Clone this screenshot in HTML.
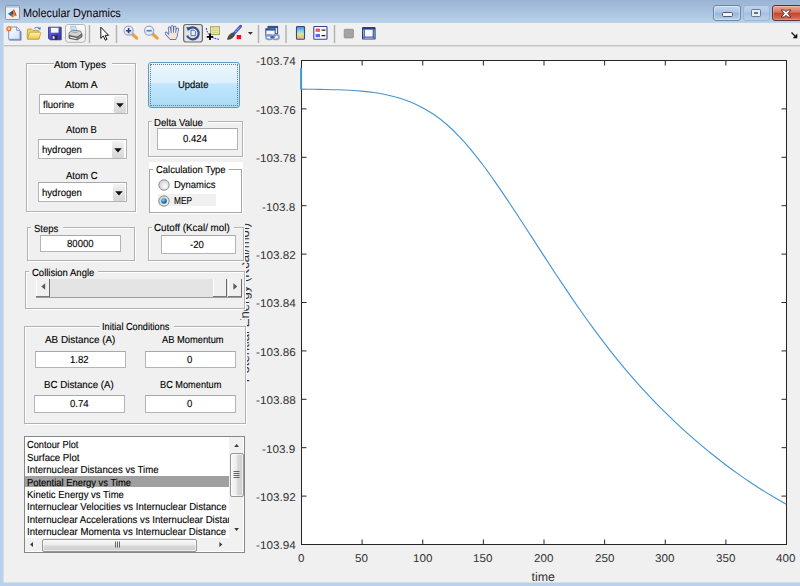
<!DOCTYPE html>
<html><head><meta charset="utf-8"><title>Molecular Dynamics</title>
<style>
html,body{margin:0;padding:0}
body{text-rendering:geometricPrecision;width:800px;height:586px;overflow:hidden;position:relative;background:#f0f0f0;font-family:"Liberation Sans",sans-serif}
.t{-webkit-text-stroke:0.12px currentColor;position:absolute;white-space:nowrap;line-height:normal;transform-origin:0 50%;display:block}
.pn{position:absolute;border:1px solid #b2b2b2;box-shadow:1px 1px 0 #fff, inset 1px 1px 0 #fff;background:#f0f0f0}
.ed{position:absolute;border:1px solid #b2b4ba;background:#fff;border-top-color:#a6a8af}
.abs{position:absolute}
</style></head><body>

<div class="abs" style="left:244.6px;top:302.5px;width:0;height:0"><span class="t" style="left:-77.54px;top:-7.94px;font-size:12.8px;color:#333;-webkit-text-stroke:0;transform-origin:50% 50%;transform:rotate(-90deg) scaleX(1.0284)">Potential Energy (Kcal/mol)</span></div>
<div class="abs" style="left:0;top:0;width:800px;height:23px;background:linear-gradient(#9ab3d2,#b9d1ea)"></div>
<div class="abs" style="left:0;top:23px;width:4px;height:563px;background:linear-gradient(90deg,#b9d1ea 0,#b9d1ea 2.6px,#c9dbef 3.2px,#dde7f1 4px)"></div>
<div class="abs" style="left:3px;top:582px;width:797px;height:4px;background:linear-gradient(#dde7f1 0,#c4d8ee 0.9px,#b9d1ea 1.6px,#b9d1ea 4px)"></div><div class="abs" style="left:0;top:582px;width:3px;height:4px;background:#b9d1ea"></div>
<div class="abs" style="left:4px;top:23px;width:796px;height:22px;background:#f0f0f0"></div>
<div class="abs" style="left:4px;top:45px;width:796px;height:1px;background:#c4c4c4"></div>
<div class="abs" style="left:4px;top:46px;width:796px;height:1px;background:#dcdcdc"></div>
<svg class="abs" style="left:5px;top:5px" width="16" height="15" viewBox="0 0 16 15">
<defs><linearGradient id="lgb" x1="0" y1="0" x2="1" y2="0"><stop offset="0" stop-color="#4d97de"/><stop offset="1" stop-color="#1b3866"/></linearGradient></defs>
<rect x="0.500" y="0.500" width="14" height="14" rx="1.400" fill="#f1f1f3" stroke="#8297b4"/>
<rect x="1" y="0.900" width="13" height="1.800" fill="#a9c9e9"/>
<path d="M2.700 8.800L7.900 5.600l0.400 3-2.100 2.600z" fill="url(#lgb)"/>
<path d="M7.900 5.600C8.300 5 8.500 4.200 8.900 4c0.700 1 1.500 4.600 3 6.900-1-0.700-2.100-0.100-2.900 0.700-1 1-2 1-2.800-0.400l2.100-2.600z" fill="#e8641f"/>
<path d="M8.600 6c0.400 2 0.200 4.500-1.200 6.200 0.800 0.100 1.600-0.500 2.200-1.300 0.200-1.900-0.200-3.700-1-4.900z" fill="#f8a030"/>
<path d="M8.900 4c0.700 1 1.500 4.600 3 6.900-0.700-0.500-1.200-0.600-1.700-0.500C10 8.200 9.600 6 8.900 4z" fill="#c8341f"/>
</svg>
<span class="t" style="left:23.4px;top:6.3px;font-size:12px;color:#0c0c18;transform:scaleX(0.905);text-shadow:0 0 3px rgba(255,255,255,0.55)">Molecular Dynamics</span>
<!-- caption buttons -->
<div class="abs" style="left:713px;top:5px;width:26px;height:14px;border:1px solid #6e86a6;border-radius:3px;background:linear-gradient(#c6d9f0 0%,#adc6e4 45%,#98b6da 50%,#b9d2ec 100%);box-shadow:inset 0 0 0 1px rgba(255,255,255,0.35)"></div>
<div class="abs" style="left:722px;top:12px;width:9px;height:3px;border:1px solid #4d5a6e;border-radius:1.5px;background:#f4f4f4"></div>
<div class="abs" style="left:743px;top:5px;width:25px;height:14px;border:1px solid #9db4d2;border-radius:3px;background:linear-gradient(#bed3ec 0%,#aec7e5 45%,#a3bfe0 50%,#b9d2ec 100%)"></div>
<div class="abs" style="left:752px;top:10px;width:4px;height:2px;border:2px solid #ececec;outline:1px solid #6d7a8e;background:#5578a8;border-radius:0.5px"></div>
<div class="abs" style="left:772px;top:5px;width:28px;height:14px;border:1px solid #5e2f33;border-radius:3px;background:linear-gradient(#e9a898 0%,#d9735d 45%,#c5432a 50%,#d7745c 100%);box-shadow:inset 0 0 0 1px rgba(255,255,255,0.25)"></div>
<svg class="abs" style="left:780px;top:8.5px" width="12" height="9" viewBox="0 0 12 9"><path d="M1 1h3.4L6 2.7 7.6 1H11L7.9 4.5 11 8H7.6L6 6.3 4.4 8H1L4.1 4.5z" fill="#fff" stroke="#4e3236" stroke-width="1" stroke-linejoin="round"/></svg>

<svg class="abs" style="left:0;top:0" width="800" height="48" viewBox="0 0 800 48">
<defs>
<linearGradient id="gpage" x1="0" y1="0" x2="1" y2="1"><stop offset="0" stop-color="#ffffff"/><stop offset="1" stop-color="#cfe0f5"/></linearGradient>
<linearGradient id="gfold" x1="0" y1="0" x2="0" y2="1"><stop offset="0" stop-color="#fdf4b4"/><stop offset="1" stop-color="#eec64c"/></linearGradient>
<linearGradient id="gcb" x1="0" y1="0" x2="0" y2="1"><stop offset="0" stop-color="#5a7be0"/><stop offset="0.35" stop-color="#7fd6e6"/><stop offset="0.6" stop-color="#d8e8a0"/><stop offset="0.8" stop-color="#f5c27a"/><stop offset="1" stop-color="#f0a0b0"/></linearGradient>
<radialGradient id="glens" cx="0.4" cy="0.35" r="0.7"><stop offset="0" stop-color="#ffffff"/><stop offset="1" stop-color="#bfe3f5"/></radialGradient>
<linearGradient id="gsave" x1="0" y1="0" x2="1" y2="1"><stop offset="0" stop-color="#7472dc"/><stop offset="0.5" stop-color="#4c4ac4"/><stop offset="1" stop-color="#3432a0"/></linearGradient>
<linearGradient id="ghov" x1="0" y1="0" x2="0" y2="1"><stop offset="0" stop-color="#fbfbfb"/><stop offset="0.500" stop-color="#f3f3f3"/><stop offset="0.520" stop-color="#ebebeb"/><stop offset="1" stop-color="#f1f1f1"/></linearGradient>
</defs>
<!-- new -->
<path d="M9.400 39.900h11.400v-8.600" fill="none" stroke="#5a68a8" stroke-width="1.200"/>
<path d="M8.700 27h8l3.300 3.300v9h-11.300z" fill="url(#gpage)" stroke="#7b92cc" stroke-width="1"/>
<path d="M16.700 27v3.300h3.300" fill="#dfe8f6" stroke="#6a80bc" stroke-width="0.800"/>
<path d="M8.900 25.400l0.800 1.600 1.700-0.600-0.600 1.700 1.600 0.800-1.600 0.800 0.600 1.700-1.700-0.600-0.800 1.600-0.800-1.600-1.700 0.600 0.600-1.700-1.600-0.800 1.600-0.800-0.600-1.700 1.700 0.600z" fill="#ec6f34"/>
<circle cx="8.900" cy="28.700" r="1.300" fill="#fbd67a"/>
<!-- open -->
<path d="M27.300 38.800v-8.600c0-0.800 0.400-1.200 1.200-1.200h3l1.200 1.400h5.200c0.800 0 1.200 0.400 1.200 1.200v7.200z" fill="#efd264" stroke="#b8952c" stroke-width="0.800"/>
<path d="M27.400 39.200l2-6.200c0.200-0.600 0.600-0.800 1.200-0.800h9.400c0.800 0 1 0.400 0.800 1l-2 6z" fill="url(#gfold)" stroke="#c09c30" stroke-width="0.800"/>
<path d="M34.200 28.700c1.500-1.700 3.800-1.700 5 -0.300" fill="none" stroke="#7a9acb" stroke-width="1.200"/>
<path d="M40.700 27l-0.400 3.100-2.500-1.500z" fill="#4a70b0"/>
<!-- save -->
<path d="M48.500 27.200h12.700v12.600h-11.200l-1.500-1.500z" fill="url(#gsave)" stroke="#2c2a86" stroke-width="0.800"/>
<rect x="51" y="27.800" width="7.500" height="4.900" fill="#f6f6fb"/>
<rect x="51.800" y="35.300" width="5.800" height="4.300" fill="#26264e"/>
<rect x="52.600" y="36.200" width="2" height="2.600" fill="#e8e8f0"/>
<!-- print (hover) -->
<rect x="65.500" y="24.500" width="20" height="17.800" rx="2.800" fill="url(#ghov)" stroke="#b2b2b2" stroke-width="1"/>
<path d="M70.700 26.200h5l1.300 5.400-5.800 0.600z" fill="#c2e3fa" stroke="#8db6da" stroke-width="0.700"/>
<path d="M69 32.800l3.600-2.600 8 0.900 1.300 3-4.800 3.100-8-1.600z" fill="#d2d2d2" stroke="#6e6e6e" stroke-width="0.800" stroke-linejoin="round"/>
<path d="M72 32l5.600 0.700" stroke="#9a9a9a" stroke-width="0.800"/>
<path d="M69.100 35.600l8 1.600 4.800-3.100v2.800l-4.800 3-8-1.600z" fill="#858585" stroke="#4a4a4a" stroke-width="0.800" stroke-linejoin="round"/>
<path d="M70.300 36.800l5.800 1.200v1l-5.800-1.200z" fill="#f4f4f4"/>
<rect x="79.300" y="35.900" width="1.300" height="1" fill="#3fc040"/>
<!-- separators -->
<path d="M89.5 25v18M116.5 25v18M258.5 25v18M286 25v18M334.5 25v18" stroke="#b4b4b4" stroke-width="1.500"/>
<!-- pointer -->
<path d="M100.8 27.2v11.2l2.6-2.4 1.9 4.2 1.7-0.8-1.9-4.1h3.5z" fill="#fff" stroke="#111" stroke-width="1" stroke-linejoin="round"/>
<!-- zoom in -->
<path d="M132.400 34.300l4.300 3.800" stroke="#e9a23c" stroke-width="3.200" stroke-linecap="round"/>
<circle cx="128.600" cy="30.700" r="4.600" fill="url(#glens)" stroke="#a09cd2" stroke-width="1.100"/>
<path d="M126 30.700h5.200M128.600 28.100v5.200" stroke="#283c84" stroke-width="1.600"/>
<!-- zoom out -->
<path d="M152.900 34.300l4.300 3.800" stroke="#e9a23c" stroke-width="3.200" stroke-linecap="round"/>
<circle cx="149.100" cy="30.700" r="4.600" fill="url(#glens)" stroke="#a09cd2" stroke-width="1.100"/>
<path d="M146.500 30.700h5.200" stroke="#5a78b4" stroke-width="1.700"/>
<!-- hand -->
<g fill="none" stroke-linecap="round" stroke-linejoin="round">
<path d="M170.200 33.500L169.300 28M172.400 33L172.100 26.800M174.500 33.200L174.900 27.300M176.400 34L177.500 29.200M168.800 36.400L166.200 33.200" stroke="#3f6fc0" stroke-width="3"/>
<path d="M168.300 35c0 2.500 1 3.600 1.600 4.500h6c0.400-1.400 1.700-2.800 1.600-5.500l-1.500-1.500h-6.500z" fill="#fbe3d0" stroke="#3f6fc0" stroke-width="0.9"/>
<path d="M170.200 33.500L169.300 28M172.400 33L172.100 26.800M174.500 33.200L174.900 27.300M176.400 34L177.500 29.200M168.800 36.400L166.200 33.200" stroke="#fbe3d0" stroke-width="1.500"/>
</g>
<!-- rotate (selected) -->
<rect x="183.600" y="24.500" width="18.800" height="17.500" rx="2.500" fill="#e2e2e2" stroke="#6c6c6c" stroke-width="1.200"/>
<path d="M188.300 29.200a6 6 0 1 1 -1.200 6.400" fill="none" stroke="#2f4f8c" stroke-width="2.100"/>
<path d="M186.300 27l4.400 0.600-2.800 3.600z" fill="#2f4f8c"/>
<path d="M191 30.200h3l1.400 1.400v4h-4.400z" fill="#e8eef8" stroke="#3a5a98" stroke-width="0.800"/>
<!-- data cursor -->
<rect x="210.600" y="26.700" width="8.800" height="7.800" fill="#eeeeb4" stroke="#a6a65e" stroke-width="1.100"/>
<path d="M212 28.800h6M212 30.600h6M212 32.400h6" stroke="#c4c47c" stroke-width="0.700"/>
<path d="M206.300 28c0.600 5.600 4.600 10.400 12.600 11.300" fill="none" stroke="#2a2ae0" stroke-width="1" stroke-dasharray="1.800 1"/>
<path d="M206.800 36.800h6.400M210 33.600v6.400" stroke="#000" stroke-width="1.800"/>
<!-- brush -->
<path d="M234.300 33.200l6.300-6.900" stroke="#4c5cc4" stroke-width="3" stroke-linecap="round"/>
<path d="M235.600 31.800l4.400-4.800" stroke="#dfe4fa" stroke-width="0.900" stroke-dasharray="1.200 1"/>
<path d="M227.600 39.400c0.200-2.800 2.200-5.800 4.900-6.500l2 1.700c-0.500 2.800-3.500 4.800-6.900 4.800z" fill="#4e4e4e" stroke="#2a2a2a" stroke-width="0.600"/>
<rect x="236.700" y="35" width="4.400" height="4.200" fill="#f20c1c"/>
<path d="M247.900 32h5l-2.500 2.700z" fill="#333"/>
<!-- link -->
<rect x="268" y="26.400" width="9.600" height="7.400" fill="#eef2f9" stroke="#2f4c8e" stroke-width="1"/>
<rect x="268" y="26.400" width="9.600" height="1.700" fill="#2f4c8e"/>
<rect x="265.800" y="28.800" width="9.400" height="7" fill="#f4f6fb" stroke="#2f4c8e" stroke-width="1"/>
<rect x="265.800" y="28.800" width="9.400" height="1.700" fill="#2f4c8e"/>
<rect x="266" y="34.800" width="6.600" height="4.600" rx="2.300" fill="none" stroke="#7f9fcc" stroke-width="1.700"/>
<rect x="272.400" y="34.800" width="6.600" height="4.600" rx="2.300" fill="none" stroke="#7f9fcc" stroke-width="1.700"/>
<path d="M270.400 37.100h4.200" stroke="#33497e" stroke-width="1.400"/>
<!-- colorbar -->
<rect x="296.500" y="26.500" width="8" height="12.800" rx="0.800" fill="url(#gcb)" stroke="#2f4a8a" stroke-width="1.100"/>
<!-- legend -->
<rect x="313.800" y="26.500" width="13.200" height="12.800" rx="0.800" fill="#fbfbfd" stroke="#2f4a8a" stroke-width="1.100"/>
<rect x="315.600" y="28.600" width="4.400" height="3.200" fill="#f05060"/>
<rect x="315.600" y="34" width="4.400" height="3.200" fill="#5868e8"/>
<path d="M321.600 30.200h3.800M321.600 35.600h3.800" stroke="#222" stroke-width="1.200"/>
<!-- hide plot tools -->
<rect x="344.200" y="29.300" width="9.200" height="8.600" rx="0.800" fill="#a4a4a4" stroke="#8c8c8c" stroke-width="0.800"/>
<!-- show plot tools -->
<rect x="362.600" y="27.600" width="12.400" height="11.400" rx="0.600" fill="#f6f8fc" stroke="#26407e" stroke-width="1.200"/>
<rect x="362.600" y="27.600" width="12.400" height="2" fill="#26407e"/>
<path d="M364.300 29v9.400M373.300 29v9.400M363 37.200h11.600" stroke="#4a66a8" stroke-width="1.300"/>
<!-- dock arrow -->
<path d="M791.500 32.500l4.600 4.600" stroke="#111" stroke-width="1.300"/>
<path d="M797.300 33.600v4.600h-4.600z" fill="#111"/>
</svg>

<div class="pn" style="left:26px;top:63px;width:108px;height:147px"></div>
<div style="position:absolute;left:53.5px;top:57px;width:58.5px;height:13px;background:#f0f0f0"></div>
<span class="t" style="left:54.40px;top:60px;font-size:10.2px;color:#000;transform:scaleX(0.9689);">Atom Types</span>
<span class="t" style="left:65.00px;top:80px;font-size:10.2px;color:#000;transform:scaleX(0.9884);">Atom A</span>
<div class="ed" style="left:39px;top:94px;width:87px;height:18px"></div>
<div style="position:absolute;left:113.5px;top:95.5px;width:12px;height:17px;border-radius:1.5px;background:linear-gradient(#f2f2f2,#d6d6d6)"></div>
<svg style="position:absolute;left:115.8px;top:102.8px" width="8" height="5"><path d="M0.2 0.3h7.6L4 4.6z" fill="#111"/></svg>
<span class="t" style="left:43.00px;top:100px;font-size:10.2px;color:#000;transform:scaleX(0.9400);">fluorine</span>
<span class="t" style="left:66.30px;top:125px;font-size:10.2px;color:#000;transform:scaleX(0.9239);">Atom B</span>
<div class="ed" style="left:37.5px;top:139px;width:87.0px;height:18px"></div>
<div style="position:absolute;left:112.0px;top:140.5px;width:12px;height:17px;border-radius:1.5px;background:linear-gradient(#f2f2f2,#d6d6d6)"></div>
<svg style="position:absolute;left:114.3px;top:147.8px" width="8" height="5"><path d="M0.2 0.3h7.6L4 4.6z" fill="#111"/></svg>
<span class="t" style="left:41.50px;top:145px;font-size:10.2px;color:#000;transform:scaleX(0.9400);">hydrogen</span>
<span class="t" style="left:66.00px;top:171px;font-size:10.2px;color:#000;transform:scaleX(0.9292);">Atom C</span>
<div class="ed" style="left:38px;top:182px;width:87px;height:18px"></div>
<div style="position:absolute;left:112.5px;top:183.5px;width:12px;height:17px;border-radius:1.5px;background:linear-gradient(#f2f2f2,#d6d6d6)"></div>
<svg style="position:absolute;left:114.8px;top:190.8px" width="8" height="5"><path d="M0.2 0.3h7.6L4 4.6z" fill="#111"/></svg>
<span class="t" style="left:42.00px;top:188px;font-size:10.2px;color:#000;transform:scaleX(0.9400);">hydrogen</span>
<div class="abs" style="left:148px;top:62px;width:90px;height:44px;border:1px solid #5f9ac6;border-radius:3px;background:linear-gradient(#ebf6fd 0%,#dcf0fc 46%,#c0e6fc 47%,#abdcf6 100%)"></div>
<div class="abs" style="left:150px;top:64px;width:86px;height:40px;border:1px dotted #777;border-radius:1px"></div>
<span class="t" style="left:178.00px;top:80px;font-size:10.2px;color:#000;transform:scaleX(0.9273);">Update</span>
<div class="pn" style="left:148px;top:121px;width:93px;height:34px"></div>
<div style="position:absolute;left:152px;top:115px;width:56px;height:13px;background:#f0f0f0"></div>
<span class="t" style="left:154.20px;top:118px;font-size:10.2px;color:#000;transform:scaleX(0.9427);">Delta Value</span>
<div class="ed" style="left:157px;top:128px;width:79px;height:20px"></div>
<span class="t" style="left:183.00px;top:134px;font-size:10.2px;color:#000;transform:scaleX(0.9400);">0.424</span>
<div style="position:absolute;left:148.5px;top:162.3px;width:94.5px;height:51.19999999999999px;background:#fff"></div>
<div class="abs" style="left:149px;top:169px;width:91px;height:42px;border:1px solid #a8a8a8;box-shadow:1px 1px 0 #fff"></div>
<div style="position:absolute;left:153px;top:163px;width:76px;height:13px;background:#fff"></div>
<span class="t" style="left:155.50px;top:165px;font-size:10.2px;color:#000;transform:scaleX(0.9265);">Calculation Type</span>
<div style="position:absolute;left:157.6px;top:194px;width:58.900000000000006px;height:12px;background:#f0f0f0"></div>
<svg class="abs" style="left:157px;top:178px" width="14" height="14"><defs><radialGradient id="rg185" cx="0.6" cy="0.6" r="0.7"><stop offset="0" stop-color="#fdfdfd"/><stop offset="1" stop-color="#c9c9c9"/></radialGradient><radialGradient id="rb185" cx="0.4" cy="0.35" r="0.7"><stop offset="0" stop-color="#8fd6f7"/><stop offset="0.5" stop-color="#2a86c8"/><stop offset="1" stop-color="#0f3d73"/></radialGradient></defs><circle cx="7" cy="7" r="5.2" fill="url(#rg185)" stroke="#8e8f8f" stroke-width="1"/></svg>
<svg class="abs" style="left:157px;top:193.5px" width="14" height="14"><defs><radialGradient id="rg200" cx="0.6" cy="0.6" r="0.7"><stop offset="0" stop-color="#fdfdfd"/><stop offset="1" stop-color="#c9c9c9"/></radialGradient><radialGradient id="rb200" cx="0.4" cy="0.35" r="0.7"><stop offset="0" stop-color="#8fd6f7"/><stop offset="0.5" stop-color="#2a86c8"/><stop offset="1" stop-color="#0f3d73"/></radialGradient></defs><circle cx="7" cy="7" r="5.2" fill="url(#rg200)" stroke="#8e8f8f" stroke-width="1"/><circle cx="7" cy="7" r="2.8" fill="url(#rb200)"/></svg>
<span class="t" style="left:174.00px;top:180px;font-size:10.2px;color:#000;transform:scaleX(0.9269);">Dynamics</span>
<span class="t" style="left:174.00px;top:196px;font-size:10.2px;color:#000;transform:scaleX(0.8143);">MEP</span>
<div class="pn" style="left:27px;top:227px;width:106px;height:32px"></div>
<div style="position:absolute;left:31px;top:222px;width:32px;height:13px;background:#f0f0f0"></div>
<span class="t" style="left:33.60px;top:224px;font-size:10.2px;color:#000;transform:scaleX(0.9355);">Steps</span>
<div class="ed" style="left:40px;top:235px;width:79px;height:15px"></div>
<span class="t" style="left:66.67px;top:239px;font-size:10.2px;color:#000;transform:scaleX(0.9400);">80000</span>
<div style="position:absolute;left:148px;top:221px;width:96.5px;height:40px;background:#f0f0f0"></div>
<div class="pn" style="left:148px;top:227px;width:94px;height:32px"></div>
<div style="position:absolute;left:152px;top:222px;width:82px;height:13px;background:#f0f0f0"></div>
<span class="t" style="left:153.90px;top:223px;font-size:10.2px;color:#000;transform:scaleX(0.9644);">Cutoff (Kcal/ mol)</span>
<div class="ed" style="left:161px;top:235px;width:73px;height:17px"></div>
<span class="t" style="left:189.97px;top:240px;font-size:10.2px;color:#000;transform:scaleX(0.9400);">-20</span>
<div style="position:absolute;left:25px;top:265px;width:220.5px;height:45px;background:#f0f0f0"></div>
<div class="pn" style="left:25px;top:271px;width:218px;height:36px"></div>
<div style="position:absolute;left:29px;top:266px;width:69px;height:13px;background:#f0f0f0"></div>
<span class="t" style="left:31.60px;top:268px;font-size:10.2px;color:#000;transform:scaleX(0.9326);">Collision Angle</span>
<div style="position:absolute;left:36px;top:278.5px;width:206px;height:18.0px;background:#e4e4e4;border-bottom:1px solid #9c9c9c"></div>
<div class="abs" style="left:36px;top:278.5px;width:12.7px;height:17px;background:#f0f0f0;border-right:1.3px solid #6a6a6a;border-bottom:1.3px solid #7a7a7a;box-shadow:inset 1px 0 0 #fff"></div>
<svg class="abs" style="left:40.8px;top:283.0px" width="5" height="8"><path d="M4.2 0.2v6.6L0.3 3.5z" fill="#5a5a5a"/></svg>
<div class="abs" style="left:213px;top:278.5px;width:13.2px;height:17px;background:#f0f0f0;border-right:1.3px solid #6a6a6a;border-bottom:1.3px solid #7a7a7a;box-shadow:inset 1px 0 0 #fff"></div>
<div class="abs" style="left:227.5px;top:278.5px;width:13.7px;height:17px;background:#f0f0f0;border-right:1.3px solid #6a6a6a;border-bottom:1.3px solid #7a7a7a;box-shadow:inset 1px 0 0 #fff"></div>
<svg class="abs" style="left:232.8px;top:283.0px" width="5" height="8"><path d="M0.4 0.2v6.6L4.3 3.5z" fill="#5a5a5a"/></svg>
<div style="position:absolute;left:24px;top:320px;width:223px;height:105px;background:#f0f0f0"></div>
<div class="pn" style="left:24px;top:326px;width:220px;height:96px"></div>
<div style="position:absolute;left:100px;top:321px;width:74px;height:13px;background:#f0f0f0"></div>
<span class="t" style="left:101.80px;top:322px;font-size:10.2px;color:#000;transform:scaleX(0.9006);">Initial Conditions</span>
<span class="t" style="left:45.00px;top:335px;font-size:10.2px;color:#000;transform:scaleX(0.9717);">AB Distance (A)</span>
<span class="t" style="left:161.60px;top:335px;font-size:10.2px;color:#000;transform:scaleX(0.9147);">AB Momentum</span>
<div class="ed" style="left:35px;top:351px;width:89px;height:15px"></div>
<span class="t" style="left:70.17px;top:355px;font-size:10.2px;color:#000;transform:scaleX(0.9400);">1.82</span>
<div class="ed" style="left:145px;top:351px;width:88.5px;height:15px"></div>
<span class="t" style="left:186.58px;top:355px;font-size:10.2px;color:#000;transform:scaleX(0.9400);">0</span>
<span class="t" style="left:44.00px;top:380px;font-size:10.2px;color:#000;transform:scaleX(0.9546);">BC Distance (A)</span>
<span class="t" style="left:159.60px;top:380px;font-size:10.2px;color:#000;transform:scaleX(0.9027);">BC Momentum</span>
<div class="ed" style="left:34px;top:395px;width:89px;height:16px"></div>
<span class="t" style="left:69.67px;top:399px;font-size:10.2px;color:#000;transform:scaleX(0.9400);">0.74</span>
<div class="ed" style="left:145px;top:395px;width:88.5px;height:16px"></div>
<span class="t" style="left:186.58px;top:399px;font-size:10.2px;color:#000;transform:scaleX(0.9400);">0</span>
<div class="abs" style="left:24px;top:436px;width:219px;height:115px;border:1px solid #828790;background:#fff"></div>
<div class="abs" style="left:25px;top:437px;width:203.5px;height:100.5px;overflow:hidden">
<div style="position:absolute;left:0px;top:38.5px;width:204px;height:11.899999999999999px;background:#a0a0a0"></div>
<span class="t" style="left:1.50px;top:3px;font-size:10.2px;color:#000;transform:scaleX(0.9083);">Contour Plot</span>
<span class="t" style="left:1.50px;top:16px;font-size:10.2px;color:#000;transform:scaleX(0.9449);">Surface Plot</span>
<span class="t" style="left:1.50px;top:28px;font-size:10.2px;color:#000;transform:scaleX(0.9451);">Internuclear Distances vs Time</span>
<span class="t" style="left:1.50px;top:41px;font-size:10.2px;color:#000;transform:scaleX(0.9227);">Potential Energy vs Time</span>
<span class="t" style="left:1.50px;top:53px;font-size:10.2px;color:#000;transform:scaleX(0.9350);">Kinetic Energy vs Time</span>
<span class="t" style="left:1.50px;top:65px;font-size:10.2px;color:#000;transform:scaleX(0.9420);">Internuclear Velocities vs Internuclear Distance</span>
<span class="t" style="left:1.50px;top:78px;font-size:10.2px;color:#000;transform:scaleX(0.9420);">Internuclear Accelerations vs Internuclear Distance</span>
<span class="t" style="left:1.50px;top:90px;font-size:10.2px;color:#000;transform:scaleX(0.9429);">Internuclear Momenta vs Internuclear Distance</span>
</div>
<div class="abs" style="left:229px;top:437px;width:14px;height:114px;background:#f1f1f1"></div>
<div class="abs" style="left:25px;top:537.5px;width:204px;height:13.5px;background:#f1f1f1"></div>
<div class="abs" style="left:229.5px;top:453px;width:12px;height:41.500px;border:1px solid #979797;border-radius:2px;background:linear-gradient(90deg,#f8f8f8 0%,#ececec 45%,#d8d8d8 55%,#cfcfcf 100%);box-shadow:inset 0 0 0 1px rgba(255,255,255,0.6)"></div>
<div class="abs" style="left:41.500px;top:538.500px;width:153px;height:11px;border:1px solid #979797;border-radius:2px;background:linear-gradient(#f8f8f8 0%,#ececec 45%,#d8d8d8 55%,#cfcfcf 100%);box-shadow:inset 0 0 0 1px rgba(255,255,255,0.6)"></div>
<svg class="abs" style="left:0;top:430px" width="250" height="125" viewBox="0 430 250 125">
<path d="M233.500 471.500h6M233.500 473.500h6M233.500 475.500h6M233.500 477.500h6" stroke="#555" stroke-width="0.900"/>
<path d="M115.500 541.500v6M117.500 541.500v6M119.500 541.500v6" stroke="#555" stroke-width="0.900"/>
<path d="M234.200 447h4.800l-2.400-2.900z" fill="#3a3a3a"/>
<path d="M234.200 528h4.800l-2.400 2.900z" fill="#3a3a3a"/>
<path d="M33 542.100v4.800l-2.900-2.400z" fill="#3a3a3a"/>
<path d="M219.400 542.100v4.800l2.900-2.400z" fill="#3a3a3a"/>
</svg>

<svg class="abs" style="left:0;top:0" width="800" height="586" viewBox="0 0 800 586">
<rect x="301.5" y="60.5" width="485.0" height="484.0" fill="#fff" stroke="#262626" stroke-width="1"/>
<path d="M362.12 544.5v-5M362.12 60.5v5M422.75 544.5v-5M422.75 60.5v5M483.38 544.5v-5M483.38 60.5v5M544.00 544.5v-5M544.00 60.5v5M604.62 544.5v-5M604.62 60.5v5M665.25 544.5v-5M665.25 60.5v5M725.88 544.5v-5M725.88 60.5v5M301.5 108.90h5M786.5 108.90h-5M301.5 157.30h5M786.5 157.30h-5M301.5 205.70h5M786.5 205.70h-5M301.5 254.10h5M786.5 254.10h-5M301.5 302.50h5M786.5 302.50h-5M301.5 350.90h5M786.5 350.90h-5M301.5 399.30h5M786.5 399.30h-5M301.5 447.70h5M786.5 447.70h-5M301.5 496.10h5M786.5 496.10h-5" stroke="#262626" stroke-width="1" fill="none"/>
<path d="M301.1 67.8V89.6" stroke="#4595d2" stroke-width="2" fill="none"/>
<path fill="none" stroke="#4595d2" stroke-width="1.15" stroke-linejoin="round" d="M301.3 89.17C303.32 89.19 309.38 89.25 313.42 89.3C317.46 89.35 321.51 89.38 325.55 89.45C329.59 89.52 333.63 89.59 337.67 89.72C341.71 89.85 345.75 90.00 349.79 90.23C353.83 90.46 357.87 90.72 361.91 91.11C365.95 91.50 370.00 91.95 374.04 92.55C378.08 93.15 382.12 93.83 386.16 94.7C390.20 95.57 394.24 96.57 398.28 97.79C402.32 99.01 406.36 100.37 410.4 102.02C414.44 103.67 418.49 105.50 422.53 107.67C426.57 109.84 430.61 112.24 434.65 115.04C438.69 117.84 442.73 120.96 446.77 124.46C450.81 127.96 454.85 131.84 458.89 136.06C462.93 140.28 466.97 144.90 471.01 149.76C475.05 154.62 479.10 159.85 483.14 165.23C487.18 170.61 491.22 176.28 495.26 182.05C499.30 187.82 503.34 193.80 507.38 199.83C511.42 205.86 515.46 212.04 519.5 218.22C523.54 224.40 527.59 230.68 531.63 236.92C535.67 243.16 539.71 249.45 543.75 255.66C547.79 261.87 551.83 268.08 555.87 274.2C559.91 280.32 563.96 286.41 568.0 292.37C572.04 298.33 576.08 304.22 580.12 309.98C584.16 315.74 588.20 321.41 592.24 326.94C596.28 332.47 600.32 337.87 604.36 343.14C608.40 348.41 612.45 353.55 616.49 358.54C620.53 363.54 624.57 368.39 628.61 373.11C632.65 377.83 636.69 382.42 640.73 386.88C644.77 391.34 648.81 395.66 652.85 399.88C656.89 404.10 660.94 408.19 664.98 412.18C669.02 416.17 673.06 420.05 677.1 423.83C681.14 427.61 685.18 431.29 689.22 434.88C693.26 438.47 697.30 441.95 701.34 445.35C705.38 448.75 709.43 452.06 713.47 455.29C717.51 458.52 721.55 461.65 725.59 464.71C729.63 467.76 733.67 470.74 737.71 473.62C741.75 476.50 745.79 479.30 749.83 482.02C753.87 484.74 757.92 487.37 761.96 489.91C766.00 492.45 770.04 494.91 774.08 497.28C778.12 499.64 784.18 502.96 786.2 504.1"/>
</svg>
<span class="t" style="left:255.53px;top:56px;font-size:11.3px;color:#333;transform:scaleX(1.0350);-webkit-text-stroke:0;">-103.74</span>
<span class="t" style="left:255.53px;top:105px;font-size:11.3px;color:#333;transform:scaleX(1.0350);-webkit-text-stroke:0;">-103.76</span>
<span class="t" style="left:255.53px;top:153px;font-size:11.3px;color:#333;transform:scaleX(1.0350);-webkit-text-stroke:0;">-103.78</span>
<span class="t" style="left:262.04px;top:202px;font-size:11.3px;color:#333;transform:scaleX(1.0350);-webkit-text-stroke:0;">-103.8</span>
<span class="t" style="left:255.53px;top:250px;font-size:11.3px;color:#333;transform:scaleX(1.0350);-webkit-text-stroke:0;">-103.82</span>
<span class="t" style="left:255.53px;top:298px;font-size:11.3px;color:#333;transform:scaleX(1.0350);-webkit-text-stroke:0;">-103.84</span>
<span class="t" style="left:255.53px;top:347px;font-size:11.3px;color:#333;transform:scaleX(1.0350);-webkit-text-stroke:0;">-103.86</span>
<span class="t" style="left:255.53px;top:395px;font-size:11.3px;color:#333;transform:scaleX(1.0350);-webkit-text-stroke:0;">-103.88</span>
<span class="t" style="left:262.04px;top:444px;font-size:11.3px;color:#333;transform:scaleX(1.0350);-webkit-text-stroke:0;">-103.9</span>
<span class="t" style="left:255.53px;top:492px;font-size:11.3px;color:#333;transform:scaleX(1.0350);-webkit-text-stroke:0;">-103.92</span>
<span class="t" style="left:255.53px;top:540px;font-size:11.3px;color:#333;transform:scaleX(1.0350);-webkit-text-stroke:0;">-103.94</span>
<span class="t" style="left:297.96px;top:553px;font-size:11.3px;color:#333;transform:scaleX(1.0300);-webkit-text-stroke:0;">0</span>
<span class="t" style="left:355.35px;top:553px;font-size:11.3px;color:#333;transform:scaleX(1.0300);-webkit-text-stroke:0;">50</span>
<span class="t" style="left:412.74px;top:553px;font-size:11.3px;color:#333;transform:scaleX(1.0300);-webkit-text-stroke:0;">100</span>
<span class="t" style="left:473.37px;top:553px;font-size:11.3px;color:#333;transform:scaleX(1.0300);-webkit-text-stroke:0;">150</span>
<span class="t" style="left:533.99px;top:553px;font-size:11.3px;color:#333;transform:scaleX(1.0300);-webkit-text-stroke:0;">200</span>
<span class="t" style="left:594.62px;top:553px;font-size:11.3px;color:#333;transform:scaleX(1.0300);-webkit-text-stroke:0;">250</span>
<span class="t" style="left:655.24px;top:553px;font-size:11.3px;color:#333;transform:scaleX(1.0300);-webkit-text-stroke:0;">300</span>
<span class="t" style="left:715.87px;top:553px;font-size:11.3px;color:#333;transform:scaleX(1.0300);-webkit-text-stroke:0;">350</span>
<span class="t" style="left:776.49px;top:553px;font-size:11.3px;color:#333;transform:scaleX(1.0300);-webkit-text-stroke:0;">400</span>
<span class="t" style="left:531.59px;top:570px;font-size:12.4px;color:#333;transform:scaleX(1.0000);-webkit-text-stroke:0;">time</span>
</body></html>
